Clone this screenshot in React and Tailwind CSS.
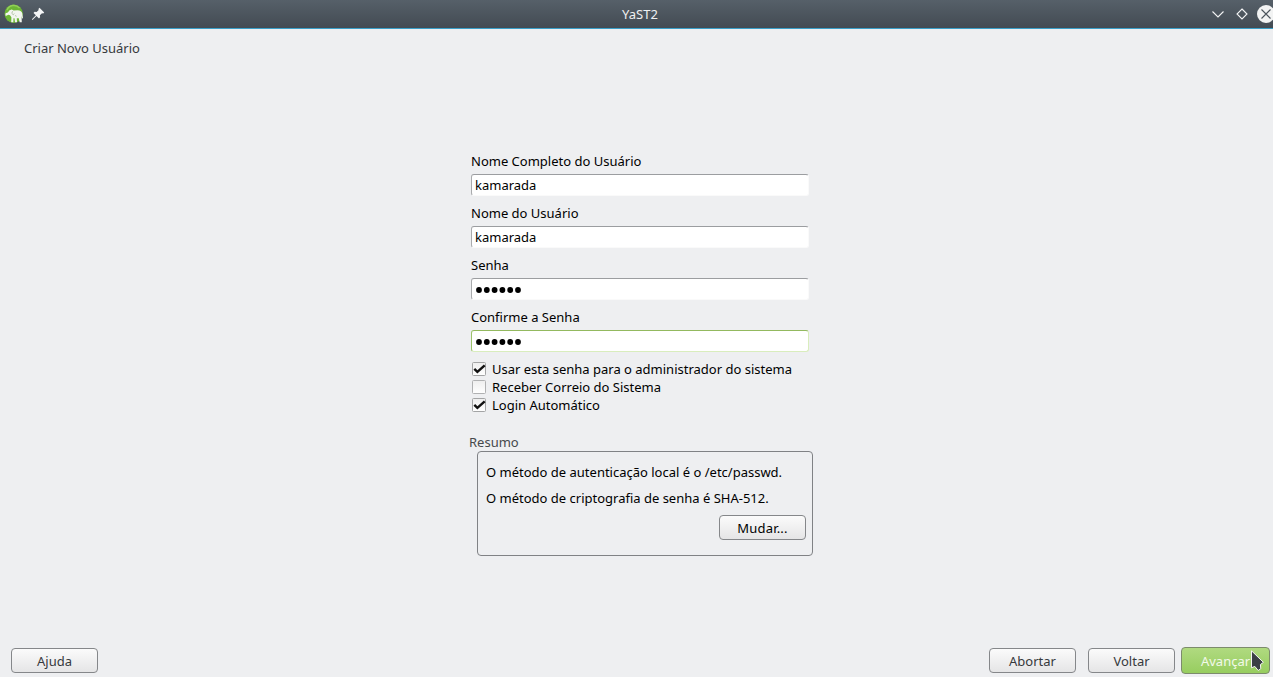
import React, { useState } from "react";

function TitleBar() {
  return (
    <header className="grid h-[29px] grid-cols-[1fr_auto_1fr] items-center border-b border-[#3a9fc8] bg-gradient-to-b from-[#566069] to-[#434b53] text-[#eff0f1]">
      <div className="flex items-center pl-1">
        <svg width="20" height="20" viewBox="0 0 20 20">
          <circle cx="9.700" cy="9.700" r="9.200" fill="#6cb535" />
          <path d="M3 6a7.500 7.500 0 0 1 12.500-2" fill="none" stroke="#91cf58" strokeWidth="1.500" />
          <path
            d="M1.600 9.300 3.800 8.600 5.600 6.300 7.800 5.400 9.600 6.500 13.500 6.200C16.400 6.200 18 7.500 18.300 9.600L19 14.200 18.200 14.600 17.600 12 17.800 18.300H15.600L14.800 14.200 12.800 14.200 13 18.300H11L10.500 14.200 9.500 14.200 9.300 18.300H7.200L7.400 13.200 6 11.200 4.300 10.700 2.400 11.800 1.300 11.400z"
            fill="#f2f5ef"
          />
          <path d="M8.600 7.200 7.800 9.400 9.300 10.800 10.300 9.500M11 11.500 12.600 12.300" fill="none" stroke="#a6b89a" strokeWidth=".8" />
        </svg>
        <svg className="ml-[7px]" width="14" height="14" viewBox="0 0 14 14" fill="#f5f6f7">
          <path d="M8.500 .8 13.200 5.500 12.200 6.500 11 6.200 8.900 8.300 9.100 10.300 8 11.400 5.500 8.900 1.500 12.900 .9 12.300 4.900 8.300 2.500 5.900 3.600 4.800 5.600 5 7.700 2.900 7.400 1.900z" />
        </svg>
      </div>
      <div className="pl-[7px] leading-[18px]">YaST2</div>
      <div className="flex items-center justify-end">
        <svg width="62" height="20" viewBox="0 0 62 20" fill="none" stroke="#f3f4f5" strokeWidth="1.1">
          <path d="M1.5 7.5 7 13l5.500-5.500" />
          <path d="M31 5l5 5-5 5-5-5z" />
          <circle cx="55" cy="10" r="9" fill="#f2f3f3" stroke="none" />
          <path d="M50.500 5.500l9 9M59.500 5.500l-9 9" stroke="#4b545c" />
        </svg>
      </div>
    </header>
  );
}

function Field({ label, initial, secret }) {
  const [value, setValue] = useState(initial);
  const border = label === "Confirme a Senha"
    ? "border-t-[#93b95f] border-l-[#9bc26b] border-r-[#d9edbd] border-b-[#d9edbd]"
    : "border-t-[#9b9da0] border-l-[#a9abad] border-r-[#fafafa] border-b-[#fafafa]";
  return (
    <label className="mb-2 block leading-[18px]">
      {label}
      {secret ? (
        <span className={"mt-1 flex h-[22px] w-[338px] items-center rounded-[3px] border bg-white pl-1 " + border}>
          <svg width="48" height="8" viewBox="0 0 48 8" fill="#000">
            {[3, 10.8, 18.6, 26.4, 34.2, 42].map((x) => (
              <circle key={x} cx={x} cy="5" r="2.9" />
            ))}
          </svg>
        </span>
      ) : (
        <input
          value={value}
          onChange={(e) => setValue(e.target.value)}
          className={"mt-1 block h-[22px] w-[338px] rounded-[3px] border bg-white pl-[3px] outline-none " + border}
        />
      )}
    </label>
  );
}

function Check({ label, initial }) {
  const [on, setOn] = useState(initial);
  return (
    <button onClick={() => setOn(!on)} className="flex h-[18px] items-center pl-px leading-[18px]">
      <svg width="14" height="14" viewBox="0 0 14 14">
        <defs>
          <linearGradient id="box" x1="0" y1="0" x2="0" y2="1">
            <stop offset="0" stopColor="#eeeeee" />
            <stop offset="1" stopColor="#fff" />
          </linearGradient>
        </defs>
        <rect x=".5" y=".5" width="13" height="13" rx="1" fill="url(#box)" stroke={on ? "#a3a4a5" : "#b0b1b2"} />
        {on && <path d="M2.300 6.800 5.400 9.900 12.700 3.300" fill="none" stroke="#111" strokeWidth="2.400" />}
      </svg>
      <span className="pl-1.5">{label}</span>
    </button>
  );
}

function PushButton({ children, className = "" }) {
  return (
    <button className={"flex h-[25px] w-[87px] items-center justify-center rounded-[4px] border border-[#85878a] bg-gradient-to-b from-[#fbfbfb] to-[#e5e5e6] pt-px leading-[18px] " + className}>
      {children}
    </button>
  );
}

export default function App() {
  return (
    <div className="flex h-[677px] w-[1273px] flex-col overflow-hidden bg-[#eeeff1] font-['Noto_Sans',sans-serif] text-[13px] text-black">
      <TitleBar />
      <h1 className="mt-[10px] ml-6 h-[18px] leading-[18px] text-[#36393c]">Criar Novo Usuário</h1>
      <main className="mt-[95px] ml-[471px] w-[342px] grow">
        <Field label="Nome Completo do Usuário" initial="kamarada" />
        <Field label="Nome do Usuário" initial="kamarada" />
        <Field label="Senha" secret />
        <Field label="Confirme a Senha" secret />
        <Check label="Usar esta senha para o administrador do sistema" initial={true} />
        <Check label="Receber Correio do Sistema" initial={false} />
        <Check label="Login Automático" initial={true} />
        <section className="mt-[19px]">
          <h2 className="-ml-0.5 h-[18px] leading-[18px] text-[#46494c]">Resumo</h2>
          <div className="ml-1.5 h-[105px] w-[336px] rounded-[4px] border border-[#808285] pt-[11px] pr-1.5 pl-2">
            <p className="leading-[18px]">O método de autenticação local é o /etc/passwd.</p>
            <p className="mt-2 leading-[18px]">O método de criptografia de senha é SHA-512.</p>
            <div className="mt-2 flex justify-end">
              <PushButton className="tracking-[0.2px]">Mudar...</PushButton>
            </div>
          </div>
        </section>
      </main>
      <footer className="flex h-[33px] shrink-0 items-start pr-[3px] pl-[11px] text-[#36393c]">
        <PushButton className="mt-1">Ajuda</PushButton>
        <div className="ml-auto flex items-start">
          <PushButton className="mt-1">Abortar</PushButton>
          <PushButton className="mt-1 ml-3">Voltar</PushButton>
          <button className="relative mt-[3px] ml-1.5 flex h-[27px] w-[89px] items-center justify-center rounded-[4px] border border-[#7c8b6c] bg-gradient-to-b from-[#b0da80] to-[#97cd5f] pt-px leading-[18px] text-[#f2f9e9]">
            Avançar
            <svg className="absolute top-0.5 left-[68px]" width="15" height="22" viewBox="0 0 15 22">
              <path d="M1.500 .8V17.800l3.300-1.400 3.400 4.100 2.600-1.800-.4-4.100 3-2.300z" fill="#3b4045" stroke="#f4f6f2" strokeWidth="1" />
            </svg>
          </button>
        </div>
      </footer>
    </div>
  );
}
